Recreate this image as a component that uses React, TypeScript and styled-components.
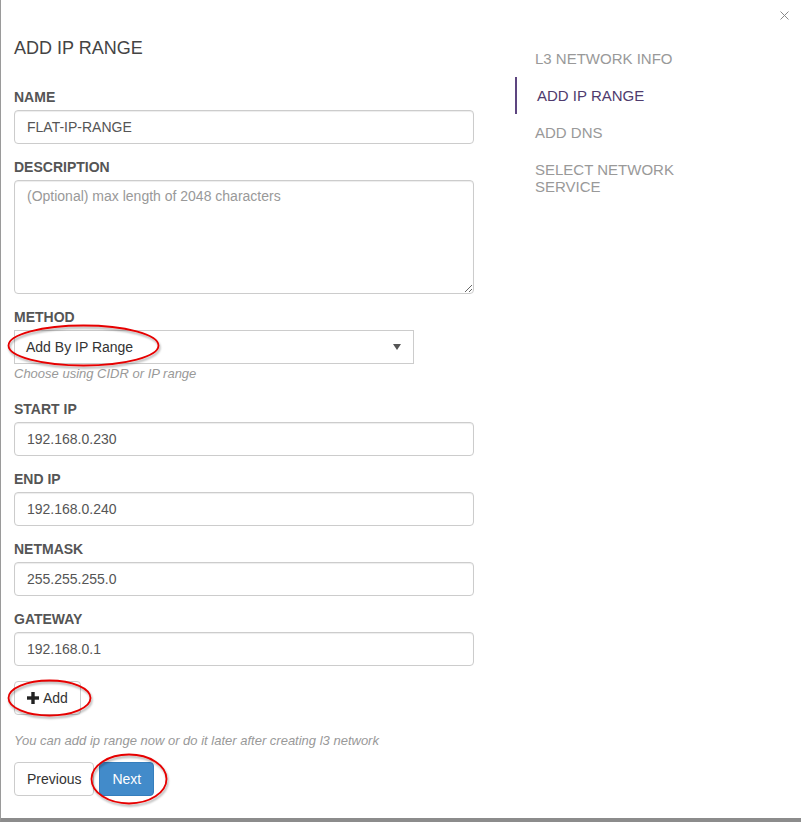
import React from "react";
import styled, { createGlobalStyle } from "styled-components";

const GlobalStyle = createGlobalStyle`
  html, body { margin: 0; padding: 0; background: #fff; }
  body { font-family: "Liberation Sans", Arial, sans-serif; }
  * { box-sizing: border-box; }
`;

const Modal = styled.div`
  position: relative;
  width: 801px;
  height: 822px;
  border-left: 1px solid #9a9a9a;
  border-bottom: 4px solid #8c8c8c;
  background: #fff;
`;

const Close = styled.button`
  position: absolute;
  top: 10px;
  right: 12px;
  width: 10px;
  height: 10px;
  padding: 0;
  border: 0;
  background: transparent;
  display: flex;
  align-items: center;
  justify-content: center;
`;

const Body = styled.div`
  display: flex;
  align-items: flex-start;
  padding: 38px 0 0 13px;
`;

const FormCol = styled.div`
  width: 460px;
  display: flex;
  flex-direction: column;
`;

const Title = styled.h4`
  margin: 0 0 29px;
  font-size: 18px;
  line-height: 20px;
  font-weight: normal;
  color: #444;
`;

const Group = styled.div`
  display: flex;
  flex-direction: column;
  margin-bottom: 13px;
`;

const Label = styled.label`
  font-size: 14px;
  line-height: 20px;
  font-weight: bold;
  color: #555;
  margin-bottom: 3px;
`;

const Input = styled.input`
  width: 460px;
  height: 34px;
  padding: 6px 12px;
  font: 14px "Liberation Sans", Arial, sans-serif;
  color: #555;
  border: 1px solid #ccc;
  border-radius: 4px;
  box-shadow: inset 0 1px 1px rgba(0, 0, 0, 0.075);
  background: #fff;
`;

const TextArea = styled.textarea`
  width: 460px;
  height: 114px;
  padding: 5px 12px;
  font: 14px/20px "Liberation Sans", Arial, sans-serif;
  color: #555;
  border: 1px solid #ccc;
  border-radius: 4px;
  box-shadow: inset 0 1px 1px rgba(0, 0, 0, 0.075);
  &::placeholder { color: #999; }
`;

const Annotated = styled.div`
  position: relative;
  align-self: flex-start;
`;

const Ring = styled.svg`
  position: absolute;
  overflow: visible;
  pointer-events: none;
`;

const Select = styled.div`
  width: 400px;
  height: 34px;
  display: flex;
  align-items: center;
  justify-content: space-between;
  padding: 0 12px 0 11px;
  border: 1px solid #ccc;
  font-size: 14px;
  color: #333;
  background: #fff;
`;

const Caret = styled.span`
  width: 0;
  height: 0;
  border-left: 4px solid transparent;
  border-right: 4px solid transparent;
  border-top: 6px solid #555;
`;

const Help = styled.p`
  margin: 1px 0 3px;
  font-size: 13px;
  line-height: 18px;
  font-style: italic;
  color: #999;
`;

const Button = styled.button<{ $primary?: boolean }>`
  height: 34px;
  padding: 0 12px;
  display: inline-flex;
  align-items: center;
  gap: 4px;
  font: 14px "Liberation Sans", Arial, sans-serif;
  border-radius: 4px;
  border: 1px solid ${(p) => (p.$primary ? "#357ebd" : "#ccc")};
  background: ${(p) => (p.$primary ? "#428bca" : "#fff")};
  color: ${(p) => (p.$primary ? "#fff" : "#333")};
`;

const AddRow = styled.div`
  margin-top: 2px;
  display: flex;
`;

const FootHelp = styled(Help)`
  margin: 17px 0 0;
`;

const Actions = styled.div`
  display: flex;
  gap: 5px;
  margin-top: 12px;
`;

const Nav = styled.ul`
  list-style: none;
  margin: 2px 0 0 41px;
  padding: 0;
  width: 190px;
`;

const NavItem = styled.li<{ $active?: boolean }>`
  padding: 10px 10px 10px 20px;
  border-left: 2px solid ${(p) => (p.$active ? "#5d4580" : "transparent")};
  font-size: 15px;
  line-height: 17px;
  color: ${(p) => (p.$active ? "#4f3b6e" : "#999")};
  ${(p) => (p.$active ? "" : "border-left: 0;")}
`;

const Ellipse = ({ w, h, left, top }: { w: number; h: number; left: number; top: number }) => (
  <Ring width={w} height={h} style={{ left, top }} viewBox={`0 0 ${w} ${h}`}>
    <defs>
      <filter id={`sh${w}`} x="-10%" y="-20%" width="120%" height="140%">
        <feDropShadow dx="1" dy="2" stdDeviation="1.2" floodColor="#000" floodOpacity="0.35" />
      </filter>
    </defs>
    <ellipse
      cx={w / 2}
      cy={h / 2}
      rx={w / 2 - 1.5}
      ry={h / 2 - 1.5}
      fill="none"
      stroke="#e60000"
      strokeWidth="1.8"
      filter={`url(#sh${w})`}
    />
  </Ring>
);

const Plus = () => (
  <svg width="12" height="12" viewBox="0 0 12 12">
    <rect x="4.3" y="0" width="3.4" height="12" fill="#222" />
    <rect x="0" y="4.3" width="12" height="3.4" fill="#222" />
  </svg>
);

const fields = [
  { label: "START IP", value: "192.168.0.230" },
  { label: "END IP", value: "192.168.0.240" },
  { label: "NETMASK", value: "255.255.255.0" },
  { label: "GATEWAY", value: "192.168.0.1" },
];

export default function App() {
  return (
    <>
      <GlobalStyle />
      <Modal>
        <Close aria-label="close">
          <svg width="9" height="9" viewBox="0 0 9 9">
            <path d="M0.5 0.5 L8.5 8.5 M8.5 0.5 L0.5 8.5" stroke="#8a8a8a" strokeWidth="1" />
          </svg>
        </Close>
        <Body>
          <FormCol>
            <Title>ADD IP RANGE</Title>
            <Group>
              <Label>NAME</Label>
              <Input defaultValue="FLAT-IP-RANGE" />
            </Group>
            <Group>
              <Label>DESCRIPTION</Label>
              <TextArea placeholder="(Optional) max length of 2048 characters" />
            </Group>
            <Group>
              <Label>METHOD</Label>
              <Annotated>
                <Select>
                  <span>Add By IP Range</span>
                  <Caret />
                </Select>
                <Ellipse w={153} h={43} left={-7} top={-6} />
              </Annotated>
              <Help>Choose using CIDR or IP range</Help>
            </Group>
            {fields.map((f) => (
              <Group key={f.label}>
                <Label>{f.label}</Label>
                <Input defaultValue={f.value} />
              </Group>
            ))}
            <AddRow>
              <Annotated>
                <Button>
                  <Plus />
                  Add
                </Button>
                <Ellipse w={85} h={38} left={-7} top={-2} />
              </Annotated>
            </AddRow>
            <FootHelp>You can add ip range now or do it later after creating l3 network</FootHelp>
            <Actions>
              <Button>Previous</Button>
              <Annotated>
                <Button $primary>Next</Button>
                <Ellipse w={78} h={52} left={-9} top={-9} />
              </Annotated>
            </Actions>
          </FormCol>
          <Nav>
            <NavItem>L3 NETWORK INFO</NavItem>
            <NavItem $active>ADD IP RANGE</NavItem>
            <NavItem>ADD DNS</NavItem>
            <NavItem>SELECT NETWORK SERVICE</NavItem>
          </Nav>
        </Body>
      </Modal>
    </>
  );
}
